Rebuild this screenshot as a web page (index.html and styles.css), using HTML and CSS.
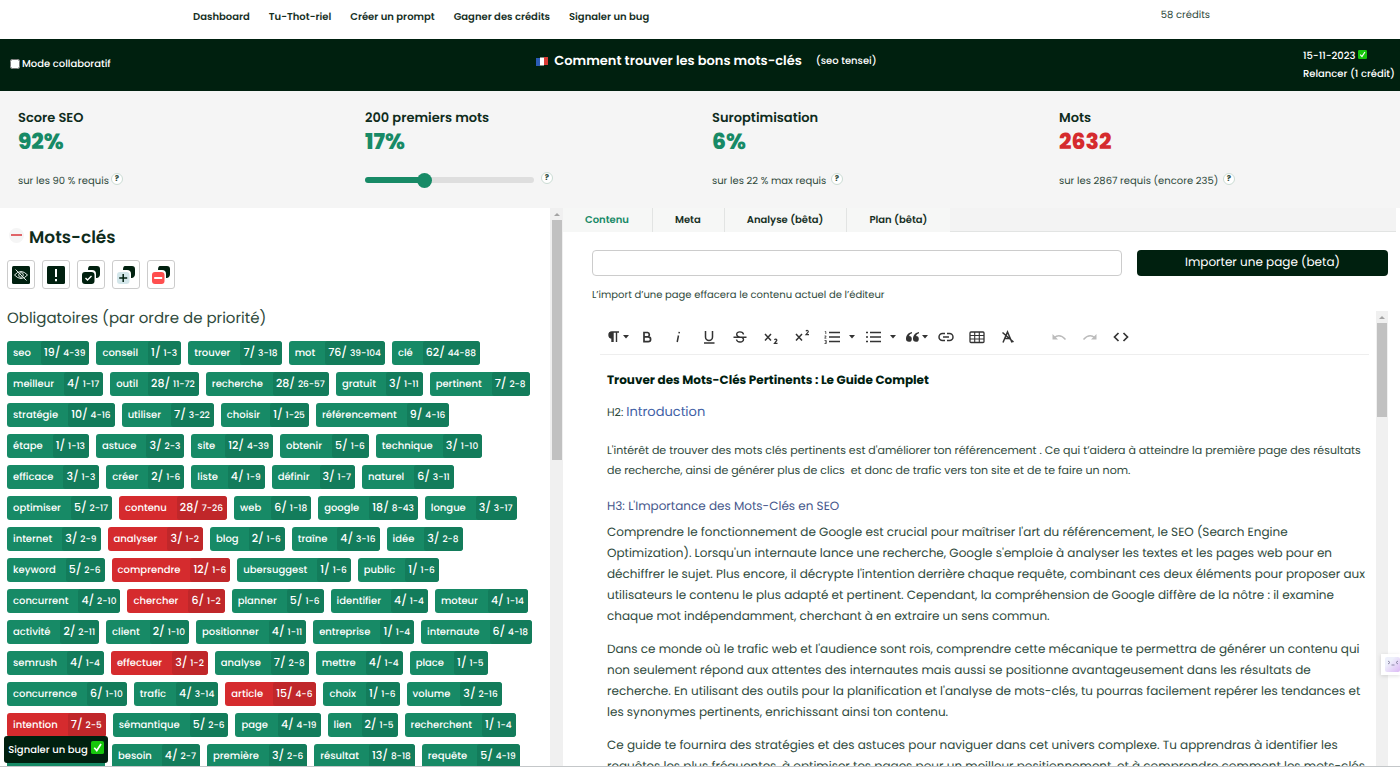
FILE: index.html
```html
<!DOCTYPE html>
<html lang="fr">
<head>
<meta charset="utf-8">
<title>Comment trouver les bons mots-clés</title>
<link rel="stylesheet" href="styles.css">
</head>
<body>
<svg class="defs" aria-hidden="true">
  <symbol id="check" viewBox="0 0 14 14"><rect width="14" height="14" rx="2" fill="#16c60c"/><path d="M3.5 7.2 6.2 10.3 10.8 3.2" fill="none" stroke="#fff" stroke-width="1.8"/></symbol>
  <symbol id="caret" viewBox="0 0 6 4"><path d="M0 0h6L3 3.5z" fill="#333"/></symbol>
  <symbol id="copyback" viewBox="0 0 18 18"><path d="M8 0h7q3 0 3 3v5q0 3-3 4h-1V8q0-4-4-4H6Q6 0 8 0z" fill="#00200f"/></symbol>
</svg>
<header class="top">
  <nav class="nav">
    <a href="#">Dashboard</a><a href="#">Tu-Thot-riel</a><a href="#">Créer un prompt</a><a href="#">Gagner des crédits</a><a href="#">Signaler un bug</a>
  </nav>
  <span class="credits">58 crédits</span>
</header>
<section class="banner">
  <label class="collab"><input type="checkbox">Mode collaboratif</label>
  <div class="title">
    <svg class="flag" viewBox="0 0 12 9"><path d="M0 1h4v8H0z" fill="#2b5bb5"/><path d="M4 .5h4v8H4z" fill="#fff"/><path d="M8 0h4v8H8z" fill="#d83b35"/></svg>
    <h1>Comment trouver les bons mots-clés</h1><span>(seo tensei)</span>
  </div>
  <div class="runinfo"><span>15-11-2023 <svg class="tick"><use href="#check"/></svg></span><a href="#">Relancer (1 crédit)</a></div>
</section>
<section class="stats">
  <div class="stat"><h2>Score SEO</h2><strong>92%</strong><p>sur les 90 % requis<button class="help">?</button></p></div>
  <div class="stat"><h2>200 premiers mots</h2><strong>17%</strong><p><input class="range" type="range" min="0" max="100" value="34" aria-label="200 premiers mots"><button class="help help-range">?</button></p></div>
  <div class="stat"><h2>Suroptimisation</h2><strong>6%</strong><p>sur les 22 % max requis <button class="help">?</button></p></div>
  <div class="stat"><h2>Mots</h2><strong class="bad">2632</strong><p>sur les 2867 requis (encore 235) <button class="help">?</button></p></div>
</section>
<main class="main">
  <section class="left">
    <div class="words">
      <div class="heading"><button class="fold" aria-label="Replier"></button><h2>Mots-clés</h2></div>
      <div class="actions">
        <button aria-label="Masquer"><svg viewBox="0 0 18 18"><rect width="18" height="18" rx="1.5" fill="#00200f"/><g fill="none" stroke="#dfe8e3" stroke-width="1"><path d="M2.5 9Q9 2 15.500 9Q9 16 2.500 9z"/><circle cx="9" cy="9" r="2.300"/><path d="M3.500 3.500l11 11"/></g></svg></button>
        <button aria-label="Important"><svg viewBox="0 0 18 18"><rect width="18" height="18" rx="1.500" fill="#00200f"/><path d="M9 3v8M9 13v2.200" stroke="#fff" stroke-width="2"/></svg></button>
        <button aria-label="Copier"><svg viewBox="0 0 18 18"><use href="#copyback"/><rect y="6" width="12.500" height="12" rx="3" fill="#00200f"/><path d="M3.500 12l2 2L9.500 10" fill="none" stroke="#fff" stroke-width="1.400"/></svg></button>
        <button aria-label="Ajouter"><svg viewBox="0 0 18 18"><use href="#copyback"/><rect y="6" width="12.500" height="12" rx="3" fill="#d3e6ea"/><path d="M2.200 12h8M6.200 8v8" stroke="#00200f" stroke-width="1.500"/></svg></button>
        <button aria-label="Retirer"><svg viewBox="0 0 18 18"><use href="#copyback"/><rect y="6" width="12.500" height="12" rx="3" fill="#ff4f4f"/><path d="M2.200 12h8" stroke="#fff" stroke-width="2"/></svg></button>
      </div>
      <h3>Obligatoires (par ordre de priorité)</h3>
      <div class="rows">
        <div class="row"><button class="chip">seo<span>19/ <small>4-39</small></span></button><button class="chip">conseil<span>1/ <small>1-3</small></span></button><button class="chip">trouver<span>7/ <small>3-18</small></span></button><button class="chip">mot<span>76/ <small>39-104</small></span></button><button class="chip">clé<span>62/ <small>44-88</small></span></button></div>
        <div class="row"><button class="chip">meilleur<span>4/ <small>1-17</small></span></button><button class="chip">outil<span>28/ <small>11-72</small></span></button><button class="chip">recherche<span>28/ <small>26-57</small></span></button><button class="chip">gratuit<span>3/ <small>1-11</small></span></button><button class="chip">pertinent<span>7/ <small>2-8</small></span></button></div>
        <div class="row"><button class="chip">stratégie<span>10/ <small>4-16</small></span></button><button class="chip">utiliser<span>7/ <small>3-22</small></span></button><button class="chip">choisir<span>1/ <small>1-25</small></span></button><button class="chip">référencement<span>9/ <small>4-16</small></span></button></div>
        <div class="row"><button class="chip">étape<span>1/ <small>1-13</small></span></button><button class="chip">astuce<span>3/ <small>2-3</small></span></button><button class="chip">site<span>12/ <small>4-39</small></span></button><button class="chip">obtenir<span>5/ <small>1-6</small></span></button><button class="chip">technique<span>3/ <small>1-10</small></span></button></div>
        <div class="row"><button class="chip">efficace<span>3/ <small>1-3</small></span></button><button class="chip">créer<span>2/ <small>1-6</small></span></button><button class="chip">liste<span>4/ <small>1-9</small></span></button><button class="chip">définir<span>3/ <small>1-7</small></span></button><button class="chip">naturel<span>6/ <small>3-11</small></span></button></div>
        <div class="row"><button class="chip">optimiser<span>5/ <small>2-17</small></span></button><button class="chip over">contenu<span>28/ <small>7-26</small></span></button><button class="chip">web<span>6/ <small>1-18</small></span></button><button class="chip">google<span>18/ <small>8-43</small></span></button><button class="chip">longue<span>3/ <small>3-17</small></span></button></div>
        <div class="row"><button class="chip">internet<span>3/ <small>2-9</small></span></button><button class="chip over">analyser<span>3/ <small>1-2</small></span></button><button class="chip">blog<span>2/ <small>1-6</small></span></button><button class="chip">traîne<span>4/ <small>3-16</small></span></button><button class="chip">idée<span>3/ <small>2-8</small></span></button></div>
        <div class="row"><button class="chip">keyword<span>5/ <small>2-6</small></span></button><button class="chip over">comprendre<span>12/ <small>1-6</small></span></button><button class="chip">ubersuggest<span>1/ <small>1-6</small></span></button><button class="chip">public<span>1/ <small>1-6</small></span></button></div>
        <div class="row"><button class="chip">concurrent<span>4/ <small>2-10</small></span></button><button class="chip over">chercher<span>6/ <small>1-2</small></span></button><button class="chip">planner<span>5/ <small>1-6</small></span></button><button class="chip">identifier<span>4/ <small>1-4</small></span></button><button class="chip">moteur<span>4/ <small>1-14</small></span></button></div>
        <div class="row"><button class="chip">activité<span>2/ <small>2-11</small></span></button><button class="chip">client<span>2/ <small>1-10</small></span></button><button class="chip">positionner<span>4/ <small>1-11</small></span></button><button class="chip">entreprise<span>1/ <small>1-4</small></span></button><button class="chip">internaute<span>6/ <small>4-18</small></span></button></div>
        <div class="row"><button class="chip">semrush<span>4/ <small>1-4</small></span></button><button class="chip over">effectuer<span>3/ <small>1-2</small></span></button><button class="chip">analyse<span>7/ <small>2-8</small></span></button><button class="chip">mettre<span>4/ <small>1-4</small></span></button><button class="chip">place<span>1/ <small>1-5</small></span></button></div>
        <div class="row"><button class="chip">concurrence<span>6/ <small>1-10</small></span></button><button class="chip">trafic<span>4/ <small>3-14</small></span></button><button class="chip over">article<span>15/ <small>4-6</small></span></button><button class="chip">choix<span>1/ <small>1-6</small></span></button><button class="chip">volume<span>3/ <small>2-16</small></span></button></div>
        <div class="row"><button class="chip over">intention<span>7/ <small>2-5</small></span></button><button class="chip">sémantique<span>5/ <small>2-6</small></span></button><button class="chip">page<span>4/ <small>4-19</small></span></button><button class="chip">lien<span>2/ <small>1-5</small></span></button><button class="chip">recherchent<span>1/ <small>1-4</small></span></button></div>
        <div class="row"><span class="chip chip-blank"></span><button class="chip">besoin<span>4/ <small>2-7</small></span></button><button class="chip">première<span>3/ <small>2-6</small></span></button><button class="chip">résultat<span>13/ <small>8-18</small></span></button><button class="chip">requête<span>5/ <small>4-19</small></span></button></div>
      </div>
    </div>
    <div class="scroll"><i></i><div class="thumb thumb-words"></div></div>
  </section>
  <section class="right">
    <div class="tabs" role="tablist"><button role="tab" aria-selected="true">Contenu</button><button role="tab">Meta</button><button role="tab">Analyse (bêta)</button><button role="tab">Plan (bêta)</button></div>
    <div class="pane">
      <form class="import"><input type="text" aria-label="Adresse de la page"><button type="button">Importer une page (beta)</button></form>
      <p class="note">L’import d’une page effacera le contenu actuel de l’éditeur</p>
      <div class="editor">
        <div class="sheet">
          <div class="toolbar">
            <button class="duo" aria-label="Paragraphe"><svg class="ico" viewBox="0 0 16 16"><path d="M14 3H7a3 3 0 0 0 0 6v4M8 3v10M11.500 3v10" fill="none" stroke="#333" stroke-width="1.400"/><path d="M7 3a3 3 0 0 0 0 6h1V3z" fill="#333"/></svg><svg class="caret"><use href="#caret"/></svg></button>
            <button aria-label="Gras"><svg class="ico" viewBox="0 0 16 16"><path d="M5 3.500h3.600a2.200 2.200 0 0 1 0 4.300H5zM5 7.800h4.200a2.400 2.400 0 0 1 0 4.800H5z" fill="none" stroke="#333" stroke-width="1.700"/></svg></button>
            <button aria-label="Italique"><svg class="ico" viewBox="0 0 16 16"><path d="M8.500 6.500 7.200 13M9.300 2.800 9 4.300" fill="none" stroke="#333" stroke-width="1.500"/></svg></button>
            <button aria-label="Souligné"><svg class="ico" viewBox="0 0 16 16"><path d="M4.500 2v6a3.500 3.500 0 0 0 7 0V2M3 14h10.500" fill="none" stroke="#333" stroke-width="1.500"/></svg></button>
            <button aria-label="Barré"><svg class="ico" viewBox="0 0 16 16"><path d="M1.500 8.300h13M11.500 5.500C11 2 4.500 2 4.700 5.500 4.800 7 6 7.800 8 8.300M4.500 10.500c.5 3.500 7.300 3.300 7-.3-.1-1-.8-1.500-1.500-1.900" fill="none" stroke="#333" stroke-width="1.400"/></svg></button>
            <button aria-label="Indice"><svg class="ico" viewBox="0 0 16 16"><path d="m2 5 6 6.500M8 5l-6 6.500" fill="none" stroke="#333" stroke-width="1.500"/><path d="M11.500 11q.5-1 1.500-.8t.8 1.300l-2.300 2.800h3" fill="none" stroke="#333" stroke-width="1.200"/></svg></button>
            <button aria-label="Exposant"><svg class="ico" viewBox="0 0 16 16"><path d="m2 5 6 6.500M8 5l-6 6.500" fill="none" stroke="#333" stroke-width="1.500"/><path d="M12 2.300q.5-1 1.500-.8t.8 1.300L12 5.600h3" fill="none" stroke="#333" stroke-width="1.200"/></svg></button>
            <button class="wide" aria-label="Liste numérotée"><svg class="ico" viewBox="0 0 16 16"><path d="M5 3.500h11M5 8h11M5 12.500h11" stroke="#333" stroke-width="1.500"/><path d="M.8 2.500h1V5M.5 7h1.700L.7 9.200h1.700M.5 11.500h1.800v3H.5M1 13h1" fill="none" stroke="#333" stroke-width=".8"/></svg><svg class="caret"><use href="#caret"/></svg></button>
            <button class="wide" aria-label="Liste à puces"><svg class="ico" viewBox="0 0 16 16"><path d="M5 3.500h11M5 8h11M5 12.500h11M1 3.500h2M1 8h2M1 12.500h2" stroke="#333" stroke-width="1.500"/></svg><svg class="caret"><use href="#caret"/></svg></button>
            <button class="duo" aria-label="Citation"><svg class="ico" viewBox="0 0 16 16"><path d="M8 3C3.500 4 2 7 2 10a2.900 2.900 0 1 0 3-3q.5-2 3-2.800zM15 3c-4.500 1-6 4-6 7a2.900 2.900 0 1 0 3-3q.5-2 3-2.800z" fill="#333"/></svg><svg class="caret"><use href="#caret"/></svg></button>
            <button aria-label="Lien"><svg class="ico" viewBox="0 0 16 16"><path d="M7 4.500H4.500a3.500 3.500 0 0 0 0 7H7M9 4.500h2.500a3.500 3.500 0 0 1 0 7H9M5 8h6" fill="none" stroke="#333" stroke-width="1.500"/></svg></button>
            <button aria-label="Tableau"><svg class="ico" viewBox="0 0 16 16"><rect x="1" y="3" width="14" height="10.500" rx="1" fill="none" stroke="#333" stroke-width="1.300"/><path d="M1 6.500h14M1 10h14M5.700 3v10.500M10.300 3v10.500" stroke="#333" stroke-width="1.100"/></svg></button>
            <button aria-label="Effacer la mise en forme"><svg class="ico" viewBox="0 0 16 16"><path d="M3 13.500 7.500 3 12 13.500M4.800 9.500h5.500M2.500 3.500l11 9.500" fill="none" stroke="#333" stroke-width="1.500"/></svg></button>
            <button class="off undo" aria-label="Annuler" disabled><svg class="ico" viewBox="0 0 16 16"><path d="M3 9q5.500-5 11.500 1.500" fill="none" stroke="#bbb" stroke-width="1.500"/><path d="M1.500 5v5.500H7z" fill="#bbb"/></svg></button>
            <button class="off" aria-label="Rétablir" disabled><svg class="ico" viewBox="0 0 16 16"><path d="M13 9Q7.500 4 1.500 10.500" fill="none" stroke="#bbb" stroke-width="1.500"/><path d="M14.500 5v5.500H9z" fill="#bbb"/></svg></button>
            <button aria-label="Code"><svg class="ico" viewBox="0 0 16 16"><path d="M5.500 4 1.500 8l4 4M10.500 4l4 4-4 4" fill="none" stroke="#333" stroke-width="1.700"/></svg></button>
          </div>
          <article class="text" contenteditable="true" spellcheck="false">
            <h1>Trouver des Mots-Clés Pertinents : Le Guide Complet</h1>
            <h2>H2: <span>Introduction</span></h2>
            <p class="intro">L'intérêt de trouver des mots clés pertinents est d'améliorer ton référencement . Ce qui t’aidera à atteindre la première page des résultats<br>de recherche, ainsi de générer plus de clics &nbsp;et donc de trafic vers ton site et de te faire un nom.</p>
            <h3>H3: L'Importance des Mots-Clés en SEO</h3>
            <p>Comprendre le fonctionnement de Google est crucial pour maîtriser l'art du référencement, le SEO (Search Engine<br>Optimization). Lorsqu'un internaute lance une recherche, Google s'emploie à analyser les textes et les pages web pour en<br>déchiffrer le sujet. Plus encore, il décrypte l'intention derrière chaque requête, combinant ces deux éléments pour proposer aux<br>utilisateurs le contenu le plus adapté et pertinent. Cependant, la compréhension de Google diffère de la nôtre : il examine<br>chaque mot indépendamment, cherchant à en extraire un sens commun.</p>
            <p>Dans ce monde où le trafic web et l'audience sont rois, comprendre cette mécanique te permettra de générer un contenu qui<br>non seulement répond aux attentes des internautes mais aussi se positionne avantageusement dans les résultats de<br>recherche. En utilisant des outils pour la planification et l'analyse de mots-clés, tu pourras facilement repérer les tendances et<br>les synonymes pertinents, enrichissant ainsi ton contenu.</p>
            <p>Ce guide te fournira des stratégies et des astuces pour naviguer dans cet univers complexe. Tu apprendras à identifier les<br>requêtes les plus fréquentes, à optimiser tes pages pour un meilleur positionnement, et à comprendre comment les mots-clés</p>
          </article>
        </div>
        <div class="scroll"><i></i><div class="thumb thumb-editor"></div></div>
      </div>
    </div>
  </section>
</main>
<button class="bug">Signaler un bug <svg><use href="#check"/></svg></button>
<button class="helper" aria-label="Assistant"><svg viewBox="0 0 15 15"><defs><linearGradient id="lilac" x2="1" y2="1"><stop offset=".3" stop-color="#eef0fb"/><stop offset="1" stop-color="#dcb9f5"/></linearGradient></defs><rect width="15" height="15" rx="2" fill="url(#lilac)"/><path d="m3 4 2 1.500L3 7M13 4l-2 1.500L13 7M6.500 8h3" fill="none" stroke="#8f8aa8"/></svg></button>
</body>
</html>
```
FILE: styles.css
```css
* { box-sizing: border-box; }
body {
  margin: 0;
  height: 100vh;
  display: flex;
  flex-direction: column;
  overflow: hidden;
  border-bottom: 1px solid #c4c7c9;
  background: #fff;
  color: #2f4a3c;
  font: 10px/18px Poppins, Inter, sans-serif;
  text-rendering: geometricPrecision;
}
h1, h2, h3, p { margin: 0; font-weight: 400; }
button, input { font: inherit; color: inherit; margin: 0; text-rendering: inherit; }
button { border: 0; padding: 0; background: none; white-space: nowrap; }
a { color: inherit; text-decoration: none; }
.defs { display: none; }

.top { flex: none; height: 39px; display: flex; justify-content: space-between; padding: 0 190px 0 193px; }
.nav { display: flex; gap: 19px; padding-top: 8px; font-weight: 600; color: #16301f; }
.credits { padding-top: 6px; }

.banner {
  flex: none;
  height: 52px;
  display: grid;
  grid-template-columns: 1fr auto 1fr;
  padding: 0 5px 0 10px;
  background: #00200f;
  color: #fff;
  font-weight: 500;
}
.collab { display: flex; align-items: center; gap: 2px; align-self: center; padding-bottom: 2px; }
.collab input { width: 10px; height: 10px; }
.title { display: flex; align-items: center; padding: 0 0 8px 8px; }
.title h1 { font-size: 13px; font-weight: 600; margin: 0 14px 0 6px; }
.flag { width: 12px; height: 9px; }
.runinfo { justify-self: end; display: flex; flex-direction: column; padding-top: 8px; }
.tick { width: 9px; height: 9px; }

.stats {
  flex: none;
  height: 117px;
  display: grid;
  grid-template-columns: repeat(4, 1fr);
  padding: 16px 6px 0;
  background: #f5f5f5;
}
.stat { padding-left: 12px; }
.stat h2 { font-size: 13px; line-height: 22px; font-weight: 600; color: #0f2c1c; }
.stat strong { display: block; font-size: 22px; line-height: 26px; font-weight: 800; color: #178a66; }
.stat .bad { color: #d52b2e; }
.stat p { display: flex; align-items: center; gap: 2px; padding-top: 17px; white-space: pre; }
.help {
  width: 12px;
  height: 12px;
  margin-bottom: 4px;
  border: 1px solid #cbdcd4;
  border-radius: 50%;
  background: #fff;
  font-size: 8px;
  line-height: 10px;
  font-weight: 700;
}
.help-range { margin-left: 5px; }
.range { appearance: none; width: 169px; height: 15px; background: none; }
.range::-webkit-slider-runnable-track {
  height: 6px;
  border-radius: 3px;
  background: linear-gradient(90deg, #178a66 34%, #dedede 34%);
}
.range::-webkit-slider-thumb { appearance: none; width: 15px; height: 15px; margin-top: -4px; border-radius: 50%; background: #178a66; }

.main { flex: 1; min-height: 0; display: grid; grid-template-columns: 563fr 837fr; }
.left { display: flex; min-width: 0; min-height: 0; }
.words { flex: 1; min-width: 0; overflow: hidden; padding: 16px 0 0 7px; }
.heading { display: flex; align-items: center; gap: 5px; padding-left: 2px; }
.heading h2 { font-size: 17px; line-height: 26px; font-weight: 600; color: #0f2c1c; }
.fold { width: 15px; height: 15px; border-radius: 50%; background: #f5f5f5; margin-bottom: 4px; display: grid; place-items: center; }
.fold::before { content: ""; width: 11px; height: 2px; background: #e06468; }
.actions { display: flex; gap: 7px; padding-top: 10px; }
.actions button { width: 28px; height: 29px; border: 1px solid #ccc; border-radius: 3px; display: grid; place-items: center; }
.actions svg { width: 18px; height: 18px; }
.words h3 { font-size: 15px; line-height: 24px; padding-top: 18px; }
.rows { display: grid; gap: 7px; padding-top: 10px; }
.row { display: flex; gap: 7px; }
.chip {
  flex: none;
  display: flex;
  gap: 10px;
  height: 24px;
  padding-left: 6px;
  overflow: hidden;
  border-radius: 3px;
  background: #178a66;
  color: #fff;
  font-weight: 500;
  line-height: 23px;
}
.chip span { padding: 0 4px 0 3px; border-radius: 3px; background: #137c5b; font-size: 11px; }
.chip small { font-size: 9px; }
.over { background: #d52b2e; }
.over span { background: #c0272a; }
.chip-blank { width: 98px; }

.scroll { flex: none; width: 12px; background: #f0f0f0; display: flex; flex-direction: column; align-items: center; }
.left .scroll { width: 13px; }
.scroll i { margin: 5px 0 4px; border: 3px solid transparent; border-top: 0; border-bottom: 3px solid #a3a3a3; }
.thumb { width: 10px; background: #c1c1c1; }
.thumb-words { height: 43%; }
.thumb-editor { height: 94px; }

.right { display: flex; flex-direction: column; min-width: 0; min-height: 0; padding-right: 4px; }
.tabs { flex: none; display: flex; height: 24px; background: #f3f3f3; border-bottom: 1px solid #e2e4e3; }
.tabs button { height: 24px; padding: 0 23px 1px 22px; background: #f6f7f6; border-right: 1px solid #e2e4e3; font-weight: 600; color: #16301f; }
.tabs button:last-child { border-right: 0; }
.tabs [aria-selected] { color: #178a66; }
.pane { flex: 1; min-height: 0; display: flex; flex-direction: column; padding: 18px 8px 0 29px; }
.import { flex: none; display: grid; grid-template-columns: 19fr 9fr; gap: 15px; height: 26px; }
.import input { min-width: 0; border: 1px solid #ccc; border-radius: 4px; }
.import button { border-radius: 4px; background: #00200f; color: #fff; font-size: 12px; }
.note { flex: none; padding-top: 10px; }
.editor { flex: 1; min-height: 0; display: flex; margin-top: 7px; }
.sheet { flex: 1; min-width: 0; overflow: hidden; padding: 8px 7px 0 8px; }
.toolbar { display: flex; height: 36px; border-bottom: 1px solid #eee; }
.toolbar button { flex: none; width: 31px; display: flex; align-items: center; justify-content: center; }
.toolbar .wide { width: 41px; gap: 9px; padding-left: 3px; }
.toolbar .duo { gap: 2px; padding-left: 2px; }
.toolbar .undo { margin-left: 20px; }
.ico { width: 16px; height: 16px; flex: none; }
.caret { width: 6px; height: 4px; flex: none; }
.text { padding: 16px 7px 0; white-space: nowrap; outline: 0; }
.text h1 { font-size: 12px; line-height: 20px; font-weight: 700; color: #00200f; }
.text h2 { font-size: 11px; line-height: 20px; padding-top: 11px; }
.text h2 span { font-size: 13px; color: #3f61a6; }
.text h3 { font-size: 12px; line-height: 20px; padding-top: 17px; color: #46588c; }
.text p { font-size: 12px; line-height: 21px; padding-bottom: 12px; }
.text h3 + p { padding-top: 5px; }
.text .intro { font-size: 11px; line-height: 20px; padding: 18px 0 0; }

.bug {
  position: fixed;
  left: 4px;
  bottom: 4px;
  width: 104px;
  height: 27px;
  display: flex;
  align-items: center;
  justify-content: center;
  gap: 3px;
  border-radius: 3px;
  background: #00200f;
  color: #fff;
  font-weight: 500;
}
.bug svg { width: 13px; height: 13px; margin-bottom: 4px; }
.helper { position: fixed; right: 0; bottom: 92px; width: 19px; height: 21px; padding-left: 4px; background: #fff; box-shadow: 0 1px 4px #0002; }
.helper svg { display: block; width: 15px; height: 15px; }
```
